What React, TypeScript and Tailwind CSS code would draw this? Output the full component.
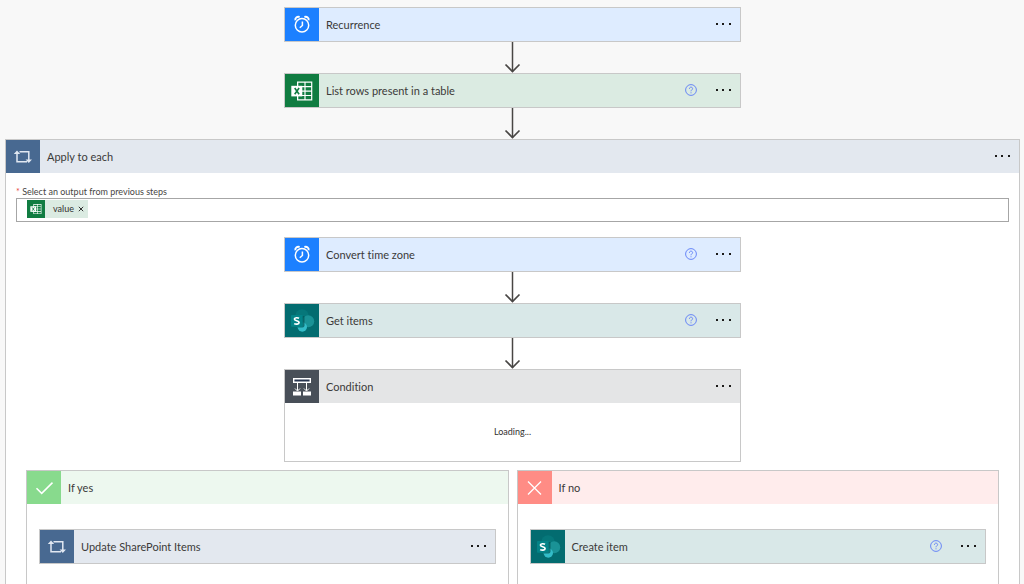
import type { ReactNode } from 'react';

const ClockIcon = () => (
  <svg width="34" height="34" viewBox="0 0 34 34" fill="none" stroke="#fff">
    <circle cx="17" cy="17.3" r="6.7" strokeWidth="1.5" />
    <path d="M17.4 13.5v4l-2.6 2.2" strokeWidth="1.5" />
    <path d="M10.4 12.2c-.6-2 1.7-4.2 4.2-3.2M23.6 12.2c.6-2-1.7-4.2-4.2-3.2" strokeWidth="1.9" />
  </svg>
);

const ExcelIcon = ({ size = 34 }: { size?: number }) => (
  <svg width={size} height={size} viewBox="0 0 34 34" fill="none">
    <path d="M12 7.5h15.3v19H12z" fill="#fff" />
    <path
      d="M13.3 8.8h6.1v3.3h-6.1zM20.6 8.8h5.5v3.3h-5.5zM13.3 13.3h6.1v3.2h-6.1zM20.6 13.3h5.5v3.2h-5.5zM13.3 17.7h6.1v3.2h-6.1zM20.6 17.7h5.5v3.2h-5.5zM13.3 22.1h6.1v3.2h-6.1zM20.6 22.1h5.5v3.2h-5.5z"
      fill="#107c41"
    />
    <rect x="6.3" y="11.8" width="11" height="10.6" fill="#fff" />
    <path d="M9.7 14l4.4 6.3M14.1 14l-4.4 6.3" stroke="#107c41" strokeWidth="1.6" />
  </svg>
);

const SharePointIcon = () => (
  <svg width="34" height="34" viewBox="0 0 34 34" fill="none">
    <circle cx="17" cy="12" r="6.8" fill="#06777a" />
    <circle cx="23.2" cy="17.2" r="6" fill="#1a9296" />
    <circle cx="17.3" cy="23" r="4.7" fill="#33bcc8" />
    <path d="M8 12h11.5v9.6q0 2-2 2H13z" fill="#025557" opacity=".7" />
    <rect x="6" y="11" width="11.7" height="11.7" rx="0.8" fill="#038387" />
    <path
      d="M14 14.2c-1-.6-4.6-.9-4.6.9 0 2 4.7 1.3 4.7 3.5 0 2-3.6 1.8-4.9 1"
      stroke="#fff"
      strokeWidth="1.7"
    />
  </svg>
);

const LoopIcon = () => (
  <svg width="34" height="34" viewBox="0 0 34 34" fill="none" stroke="#e1e8f2" strokeWidth="1.5">
    <path d="M11 12v9.7h10M13.5 11.7h9.3v9" />
    <path d="M11 10.4l-3.2 3.6h6.4zM22.8 23l-3.2-3.6H26z" fill="#e1e8f2" stroke="none" />
  </svg>
);

const ConditionIcon = () => (
  <svg width="34" height="34" viewBox="0 0 34 34" fill="none" stroke="#fff">
    <path d="M8.7 8.8h16.6v3.4H8.7z" fill="#25334d" strokeWidth="1.4" />
    <path d="M12.5 12.5v8M21.5 12.5v8M10 18.5l2.5 2.5 2.5-2.5M19 18.5l2.5 2.5 2.5-2.5" strokeWidth="1" />
    <path d="M8 21.5h8v4H8zM18 21.5h8v4h-8z" fill="#fff" stroke="none" />
  </svg>
);

const CheckIcon = () => (
  <svg width="34" height="34" viewBox="0 0 34 34" fill="none" stroke="#fff" strokeWidth="1.5">
    <path d="M9.5 17.2l5.2 5.2L25.5 11.6" />
  </svg>
);

const CrossIcon = () => (
  <svg width="34" height="34" viewBox="0 0 34 34" fill="none" stroke="#fff" strokeWidth="1.3">
    <path d="M10 10.5l13 13M23 10.5l-13 13" />
  </svg>
);

function Arrow() {
  return (
    <svg className="mx-auto block" width="17" height="31" viewBox="0 0 17 31" fill="none" stroke="#484644">
      <path d="M8.5 0v29.5" strokeWidth="1.5" />
      <path d="M1.5 22.5l7 7 7-7" strokeWidth="1.7" />
    </svg>
  );
}

interface HeaderProps {
  title: string;
  icon: ReactNode;
  iconClass: string;
  barClass: string;
  help?: boolean;
  menu?: boolean;
}

function Header({ title, icon, iconClass, barClass, help = false, menu = true }: HeaderProps) {
  return (
    <div className={`flex h-[33px] items-center ${barClass}`}>
      <div className={`h-full w-[34px] shrink-0 overflow-hidden ${iconClass}`}>{icon}</div>
      <h3 className="grow pl-[7px] text-[11px] leading-[15px] text-[#3b3a39]">{title}</h3>
      {help && (
        <button type="button" aria-label={`Help for ${title}`} className="mr-4">
          <svg className="block" width="13" height="13" viewBox="0 0 13 13" fill="none" stroke="#5b7cf7">
            <circle cx="6" cy="6" r="5.4" strokeWidth="0.9" />
            <path d="M4.4 4.8c0-2.2 3.2-2.1 3.2-.2 0 1.2-1.6 1.3-1.6 2.7M6 8.3v1" strokeWidth="0.9" />
          </svg>
        </button>
      )}
      {menu && (
        <button type="button" aria-label={`Menu for ${title}`} className="mr-2">
          <svg className="block" width="18" height="13" viewBox="0 0 18 13" fill="#1b1a19">
            <path d="M2 5h2v2H2zM8 5h2v2H8zM15 5h2v2h-2z" />
          </svg>
        </button>
      )}
    </div>
  );
}

function Card({ children, ...header }: HeaderProps & { children?: ReactNode }) {
  return (
    <section className="mx-auto w-full max-w-[457px] border border-[#c8c8c8] bg-white">
      <Header {...header} />
      {children}
    </section>
  );
}

function Branch({ children, ...header }: HeaderProps & { children: ReactNode }) {
  return (
    <section className="min-w-0 flex-1 border border-b-0 border-[#c8c8c8]">
      <Header {...header} menu={false} />
      <div className="px-3 pt-[25px]">{children}</div>
    </section>
  );
}

const blue = { icon: <ClockIcon />, iconClass: 'bg-[#1c80ff]', barClass: 'bg-[#deecff]' };
const green = { icon: <ExcelIcon />, iconClass: 'bg-[#107c41]', barClass: 'bg-[#dbebe2]' };
const teal = { icon: <SharePointIcon />, iconClass: 'bg-[#036c70]', barClass: 'bg-[#d9e8e8]' };
const slate = { icon: <LoopIcon />, iconClass: 'bg-[#486991]', barClass: 'bg-[#e3e8ef]' };

export default function App() {
  return (
    <main className="flex h-screen flex-col overflow-hidden bg-[#f8f8f8] pt-[7px] pr-1 pl-[5px] font-['Lato',sans-serif] [font-variant-ligatures:none]">
      <Card title="Recurrence" {...blue} />
      <Arrow />
      <Card title="List rows present in a table" {...green} help />
      <Arrow />

      <section className="flex grow flex-col border border-b-0 border-[#c8c8c8] bg-white">
        <Header title="Apply to each" {...slate} />

        <div className="px-[10px] pt-[13px] pb-[15px]">
          <label htmlFor="output" className="block text-[9px] leading-3 text-[#484644]">
            <span className="text-[#e8483f]">*</span> Select an output from previous steps
          </label>
          <div className="flex h-6 items-start border border-[#a6a6a6] pt-px pl-[10px]">
            <span className="flex h-[18px] items-center bg-[#dbebe2] text-[9px] text-[#323130]">
              <span className="bg-[#107c41]">
                <ExcelIcon size={18} />
              </span>
              <span className="pl-2">value</span>
              <button type="button" aria-label="Remove value" className="px-1">
                <svg width="6" height="6" viewBox="0 0 6 6" stroke="#323130">
                  <path d="M.8.8l4.4 4.4M5.2.8L.8 5.2" />
                </svg>
              </button>
            </span>
            <input id="output" type="text" className="h-full min-w-0 grow px-1 text-[9px] outline-none" />
          </div>
        </div>

        <Card title="Convert time zone" {...blue} help />
        <Arrow />
        <Card title="Get items" {...teal} help />
        <Arrow />
        <Card title="Condition" icon={<ConditionIcon />} iconClass="bg-[#484f58]" barClass="bg-[#e4e5e6]">
          <p className="py-[23px] text-center text-[9px] leading-3 text-[#323130]">Loading...</p>
        </Card>

        <div className="flex grow gap-2 px-5 pt-2">
          <Branch title="If yes" icon={<CheckIcon />} iconClass="bg-[#88da8d]" barClass="bg-[#edf8ef]">
            <Card title="Update SharePoint Items" {...slate} />
          </Branch>
          <Branch title="If no" icon={<CrossIcon />} iconClass="bg-[#ff8c85]" barClass="bg-[#ffecec]">
            <Card title="Create item" {...teal} help />
          </Branch>
        </div>
      </section>
    </main>
  );
}
